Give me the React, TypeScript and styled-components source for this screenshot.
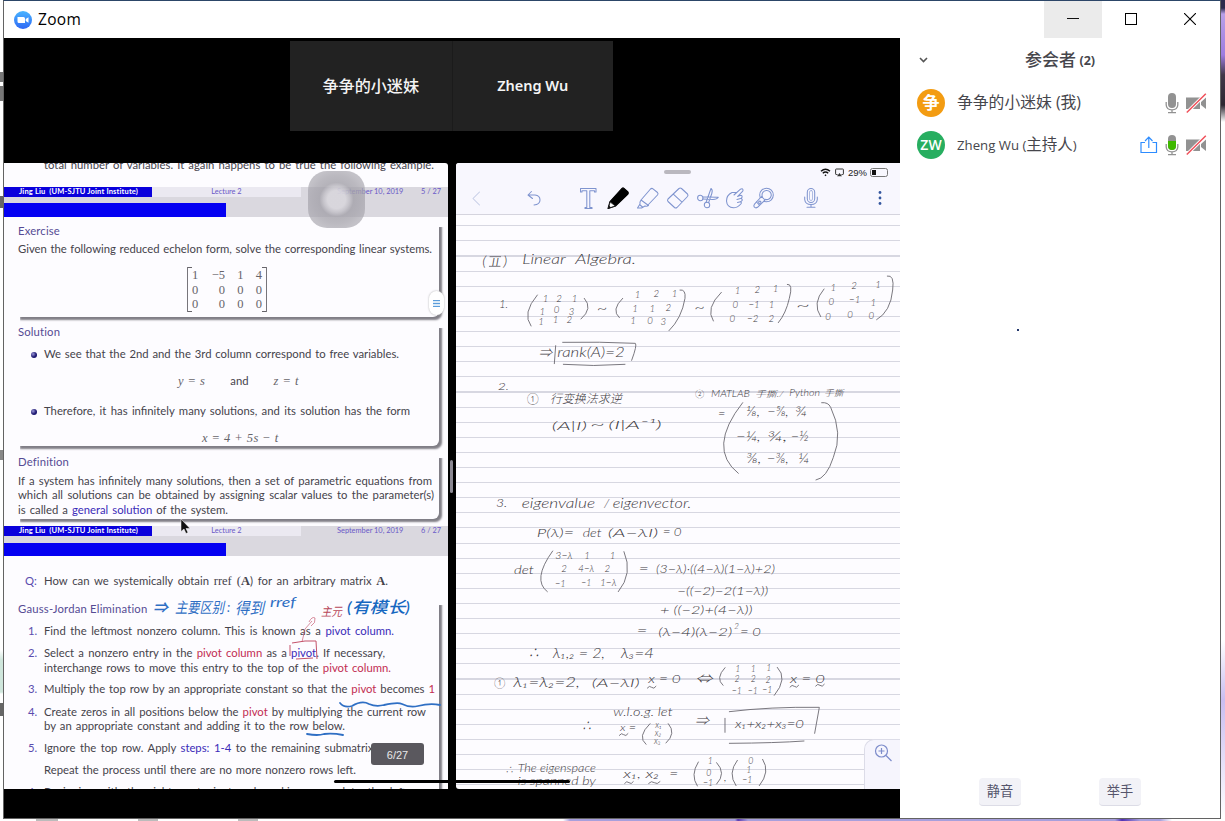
import React from "react";
import styled, { createGlobalStyle } from "styled-components";

const Global = createGlobalStyle`
  * { box-sizing: border-box; }
  body { margin: 0; overflow: hidden; font-family: "Open Sans", "Noto Sans CJK SC", sans-serif; }
`;

const Desktop = styled.div`
  width: 1225px;
  height: 821px;
  padding: 0 4px 1px 3px;
  background:
    linear-gradient(90deg, #fff 0 36px, #bbb 36px 58px, #fff 58px 138px, #bbb 138px 158px, #fff 158px 238px, #bbb 238px 258px, #fff 258px 563px, #a79fdc 570px 735px, #5b3bb0 738px, #a79fdc 748px 1115px, #5130b4 1122px, #a79fdc 1140px 1160px, #fff 1172px) 0 818px / 1225px 3px no-repeat,
    linear-gradient(#2c2a4c 0 8px, #b9a0e8 14px, #9d7ce0 55px, #403848 75px, #2c2630 105px, #fff 122px 640px, #c9bdf0 700px, #fff 818px) 1221px 0 / 4px 821px no-repeat,
    linear-gradient(#fff 0 72px, #777 72px 82px, #fff 82px 86px, #777 86px 101px, #fff 101px 196px, #666 196px 208px, #fff 208px 450px, #888 450px 460px, #fff 460px 650px, #cfe6dc 660px 692px, #fff 694px 703px, #666 703px 716px, #fff 716px) #fff;
`;
const Window = styled.div`
  display: flex;
  flex-direction: column;
  height: 819px;
  background: #fff;
  border: 1px solid #636363;
  border-top-color: #2c4668;
`;
const TitleBar = styled.header`
  height: 37px;
  display: flex;
  align-items: center;
  padding-left: 10px;
`;
const Title = styled.span`
  flex: 1;
  margin: -2px 0 0 6px;
  font-size: 15.5px;
  letter-spacing: 0.3px;
  color: #000;
`;
const WinButton = styled.div<{ $active?: boolean; $w: number }>`
  width: ${(p) => p.$w}px;
  height: 37px;
  padding-bottom: 1px;
  display: flex;
  align-items: center;
  justify-content: center;
  background: ${(p) => (p.$active ? "#ebebeb" : "transparent")};
`;
const Body = styled.div`
  flex: 1;
  min-height: 0;
  display: flex;
`;
const Stage = styled.main`
  width: 896px;
  background: #000;
`;
const Tiles = styled.div`
  height: 125px;
  padding: 3px 0 0 286px;
  display: flex;
`;
const Tile = styled.div`
  width: 161.5px;
  height: 90px;
  padding-bottom: 2px;
  background: #222;
  color: #f4f4f4;
  display: flex;
  align-items: center;
  justify-content: center;
  & + & { border-left: 1px solid #1b1b1b; }
`;
const TileName = styled.span<{ $size: number }>`
  font-family: "Noto Sans", "Noto Sans CJK SC", sans-serif;
  font-size: ${(p) => p.$size}px;
  font-weight: ${(p) => (p.$size > 15 ? 500 : 600)};
`;
const Shared = styled.div`
  position: relative;
  height: 626px;
  display: flex;
`;

/* ---------- slides ---------- */
const Slides = styled.section`
  width: 444px;
  height: 626px;
  overflow: hidden;
  position: relative;
  background: #fdfcff;
  border-radius: 0 3px 0 0;
  font-family: Lato, sans-serif;
  font-size: 11.3px;
  line-height: 14px;
  color: #45434b;
`;
const Row = styled.div<{ $gap?: number; $x?: number; $w?: number; $ls?: number }>`
  height: 14px;
  margin-top: ${(p) => p.$gap ?? 0}px;
  margin-left: ${(p) => p.$x ?? 0}px;
  width: ${(p) => (p.$w ? p.$w + "px" : "auto")};
  letter-spacing: ${(p) => p.$ls ?? 0}px;
  text-align: ${(p) => (p.$w ? "justify" : "left")};
  text-align-last: ${(p) => (p.$w ? "justify" : "left")};
`;
const Heading = styled(Row)`
  color: #554b94;
`;
const Tint = styled.span<{ $c?: string }>`
  color: ${(p) => p.$c ?? "#3b2bb8"};
`;
const Card = styled.div<{ $top: number; $h: number }>`
  position: relative;
  margin: ${(p) => p.$top}px 8px 0 14px;
  height: ${(p) => p.$h}px;
  &::before {
    content: "";
    position: absolute;
    inset: 2px 1px 0 2px;
    border-radius: 0 0 6px 0;
    box-shadow: 1.5px 1.5px 2px 0.7px #807e86;
    clip-path: inset(1px -6px -6px 0);
  }
`;
const Footer = styled.div<{ $top: number }>`
  margin-top: ${(p) => p.$top}px;
  height: 10px;
  display: flex;
  font-size: 7.4px;
  line-height: 9.5px;
  color: #6a58c8;
`;
const Author = styled.div`
  width: 148px;
  padding-left: 15px;
  background: #0a00dc;
  color: #fff;
  font-weight: 700;
  font-size: 7.5px;
  letter-spacing: 0.16px;
  white-space: pre;
`;
const Lecture = styled.div`
  width: 149px;
  background: #ebe9f1;
  text-align: center;
`;
const DateCell = styled.div`
  flex: 1;
  padding: 0 7px 0 36px;
  display: flex;
  justify-content: space-between;
  background: #dad8df;
`;
const Band = styled.div<{ $pt: number }>`
  height: 20px;
  padding-top: ${(p) => p.$pt}px;
  background: #dad8df;
`;
const Progress = styled.div`
  width: 222px;
  height: 100%;
  background: #0400f2;
`;
const Matrix = styled.div`
  width: 80px;
  height: 45px;
  margin: 11px 0 0 169px;
  padding: 0 4px;
  display: grid;
  grid-template-columns: 5px 28px 18.5px 18.5px;
  grid-auto-rows: 14.6px;
  text-align: right;
  font: 12.5px/17px "Liberation Serif", serif;
  color: #66646a;
  border: solid #77757b;
  border-width: 0 1px;
  background: linear-gradient(#66646a, #66646a) 0 0 / 4px 1px no-repeat, linear-gradient(#66646a, #66646a) 100% 0 / 4px 1px no-repeat, linear-gradient(#66646a, #66646a) 0 100% / 4px 1px no-repeat, linear-gradient(#66646a, #66646a) 100% 100% / 4px 1px no-repeat;
`;
const Formula = styled.div<{ $gap: number; $x: number }>`
  height: 14px;
  margin: ${(p) => p.$gap}px 0 0 ${(p) => p.$x}px;
  display: flex;
  gap: 25px;
  i { font: italic 12.5px/14px "Liberation Serif", serif; color: #66646a; letter-spacing: 0.45px; }
`;
const Serif = styled.span<{ $bold?: boolean }>`
  font: ${(p) => (p.$bold ? 700 : 400)} 12.5px/14px "Liberation Serif", serif;
`;
const Item = styled.div<{ $gap: number }>`
  display: flex;
  margin-top: ${(p) => p.$gap}px;
`;
const Marker = styled.div<{ $x: number; $w: number }>`
  width: ${(p) => p.$w}px;
  margin-left: ${(p) => p.$x}px;
  color: #5a4cae;
`;
const Bullet = styled.div`
  width: 6px;
  height: 6px;
  margin: 4.5px 7px 0 13px;
  border-radius: 50%;
  background: radial-gradient(circle at 35% 35%, #9a96d8, #1c1770 55%);
`;
const Overlay = styled.svg`
  position: absolute;
  left: 0;
  top: 0;
`;
const Touch = styled.div`
  position: absolute;
  left: 304px;
  top: 8px;
  width: 57px;
  height: 57px;
  border-radius: 19px;
  background: radial-gradient(circle, #d8d6dcf0 0 9px, #c3c1c8e0 13px, #a4a2aad0 17px, #a5a3abc0 24px, #a5a3aba8 30px);
`;
const Tab = styled.div`
  position: absolute;
  left: 425px;
  top: 128px;
  width: 15px;
  height: 24px;
  border-radius: 8px;
  background: #fff;
  box-shadow: 0 0 2px #aaa;
  padding: 9px 0 0 4px;
`;
const Bars = styled.div`
  width: 7px;
  height: 7px;
  background: repeating-linear-gradient(#5c9dda 0 1.2px, #dcebf8 1.2px 3px);
`;
const PageBadge = styled.div`
  position: absolute;
  left: 367px;
  top: 580px;
  width: 53px;
  height: 22px;
  border-radius: 3px;
  background: #5a585e;
  color: #e8e8ea;
  font: 11px/24px "Liberation Sans", sans-serif;
  text-align: center;
`;
const Divider = styled.div`
  width: 8px;
  padding: 297px 0 0 2px;
  background: #000;
`;
const Grip = styled.div`
  width: 3px;
  height: 33px;
  border-radius: 2px;
  background: #8b8892;
`;
const HomeBar = styled.div`
  position: absolute;
  left: 330px;
  top: 617px;
  width: 236px;
  height: 3px;
  border-radius: 2px;
  background: #000;
`;

/* ---------- notes ---------- */
const Notes = styled.section`
  position: relative;
  width: 444px;
  height: 626px;
  overflow: hidden;
  background: #fdfcff;
  border-radius: 3px 0 0 3px;
`;
const NotesHead = styled.div`
  height: 51.5px;
  background: #f8f7fe;
  border-bottom: 1px solid #d5d4de;
`;
const Status = styled.div`
  height: 18px;
  display: flex;
  align-items: center;
  gap: 4px;
  padding-left: 208px;
  font: 9.5px "Liberation Sans", sans-serif;
  color: #222;
`;
const Pull = styled.div`
  width: 27px;
  height: 3.5px;
  border-radius: 2px;
  background: #bab8bf;
  margin-right: 125px;
`;
const Battery = styled.div`
  width: 18px;
  height: 9px;
  padding: 1px;
  margin-left: -1px;
  border: 1px solid #777;
  border-radius: 2.5px;
  &::before { content: ""; display: block; width: 4px; height: 5px; background: #111; }
`;
const Tools = styled.div`
  display: flex;
  padding-top: 5px;
`;
const ToolIcon = styled.svg<{ $ml: number }>`
  width: 24px;
  height: 24px;
  flex: none;
  margin-left: ${(p) => p.$ml}px;
  fill: none;
  stroke: #7f94cf;
  stroke-width: 1.05;
  stroke-linejoin: round;
  stroke-linecap: round;
`;
const Ruled = styled.div`
  height: 574px;
  background: repeating-linear-gradient(transparent 0 10.2px, #d7d7e1 10.2px 11.3px, transparent 11.3px 15.11px);
`;
const Ink = styled.svg`
  display: block;
  font-family: Lato, "Noto Sans CJK SC", sans-serif;
  font-style: italic;
  font-weight: 300;
  fill: #3d3b42;
  path { fill: none; stroke: #6b6970; stroke-width: 2.7; stroke-linecap: round; }
`;
const Magnify = styled.div`
  position: absolute;
  right: 0;
  bottom: 0;
  width: 36px;
  height: 50px;
  padding: 3px 0 0 8px;
  border: 1px solid #dcdce8;
  border-right: 0;
  border-bottom: 0;
  border-radius: 10px 0 0 0;
  background: #f6f5fd;
`;

type T = [string, number, number, number, number?];
const Words = ({ items }: { items: T[] }) => (
  <>
    {items.map(([s, x, y, w, size], i) => (
      <text key={i} x={x} y={y} fontSize={size ?? 37} textLength={w} lengthAdjust="spacingAndGlyphs">
        {s}
      </text>
    ))}
  </>
);
type D = [string, number, number];
const Digits = ({ items, size = 29 }: { items: D[]; size?: number }) => (
  <g fontSize={size} textAnchor="middle">
    {items.map(([s, x, y], i) => (
      <text key={i} x={x} y={y}>{s}</text>
    ))}
  </g>
);
const tilde = (x: number, y: number, w = 26) => `M${x} ${y}q${w / 4} -9 ${w / 2} -2t${w / 2} -3`;

const Handwriting = () => (
  <Ink width="444" height="574" viewBox="456 215 444 574">
    <g transform="translate(450 155) scale(.33333)">
      <Words items={[
        ["(", 97, 332, 12, 38], ["II", 124, 332, 24, 36], [")", 160, 332, 12, 38],
        ["Linear", 217, 326, 130, 39], ["Algebra.", 376, 328, 182, 41],
        ["1.", 148, 458, 26], ["~", 440, 474, 32, 40], ["~", 733, 472, 32, 40], ["~", 1038, 465, 42, 40],
        ["⇒", 266, 606, 40], ["rank(A)=2", 322, 606, 202, 38],
      ]} />
      <path d="M120 305H152M118 334H150" />
      <Digits items={[
        ["1", 287, 440], ["2", 327, 440], ["1", 374, 440], ["1", 277, 480], ["0", 320, 474], ["3", 365, 480], ["1", 273, 510], ["1", 317, 504], ["2", 358, 504],
        ["1", 563, 430], ["2", 619, 427], ["1", 674, 425], ["1", 555, 472], ["1", 607, 472], ["2", 655, 468], ["1", 549, 508], ["0", 600, 508], ["3", 640, 510],
        ["1", 863, 418], ["2", 922, 415], ["1", 977, 412], ["0", 856, 460], ["−1", 912, 460], ["1", 965, 458], ["0", 847, 502], ["−2", 908, 502], ["2", 964, 500],
        ["1", 1150, 408], ["2", 1212, 402], ["1", 1284, 398], ["0", 1144, 450], ["−1", 1214, 445], ["1", 1270, 452], ["0", 1134, 495], ["0", 1200, 488], ["0", 1264, 492],
      ]} />
      <path d="M262 420Q215 475 243 513M403 430Q430 460 393 492M518 430Q482 465 508 488M690 405Q708 402 705 430Q695 490 657 527M814 412Q765 460 790 498M1012 388Q1030 385 1018 430Q1008 475 985 503M1122 402Q1085 445 1112 485M1312 363Q1334 358 1328 405Q1322 470 1280 494M317 572L313 626M338 562Q450 560 556 565Q562 570 545 616M340 628Q430 635 525 628" />
    </g>
    <g transform="translate(450 370) scale(.33333)">
      <Words items={[
        ["2.", 143, 60, 34, 28], ["①", 230, 98, 36, 36], ["行变换法求逆", 300, 98, 215, 36],
        ["(A|I)", 305, 180, 106], ["~", 420, 178, 45, 40], ["(I|A⁻¹)", 475, 178, 160],
        ["②", 735, 80, 28, 26], ["MATLAB", 783, 81, 117, 28], ["手撕./", 915, 80, 86, 25], ["Python", 1018, 78, 92, 28], ["手撕", 1122, 78, 58, 25],
        ["=", 804, 143, 22], ["⅛,", 888, 138, 42, 38], ["−⅝,", 952, 138, 64, 38], ["¾", 1035, 138, 36, 38],
        ["−¼,", 858, 212, 74, 38], ["¾,", 952, 212, 60, 38], ["−½", 1022, 212, 54, 38],
        ["⅜,", 888, 280, 46, 38], ["−⅜,", 950, 280, 66, 38], ["¼", 1044, 280, 34, 38],
        ["3.", 138, 412, 34, 36], ["eigenvalue", 215, 415, 220, 42], ["/", 462, 415, 16], ["eigenvector.", 488, 415, 236, 42],
        ["P(λ)=", 260, 500, 112], ["det", 398, 500, 57], ["(A−λI)", 473, 500, 152], ["= 0", 638, 498, 57],
        ["det", 192, 612, 60], ["=", 566, 610, 30], ["(3−λ)·((4−λ)(1−λ)+2)", 618, 608, 357],
        ["3−λ", 316, 568, 52, 30], ["4−λ", 385, 605, 48, 28], ["−1", 315, 650, 32, 28], ["−1", 394, 648, 30, 28], ["1−λ", 450, 648, 50, 28],
      ]} />
      <Digits items={[["1", 411, 568], ["1", 488, 566], ["2", 342, 607], ["2", 472, 607]]} />
      <path d="M878 98Q770 235 865 310M1115 98Q1135 96 1142 112Q1180 190 1150 262Q1130 325 1098 330M308 543Q245 630 292 665M522 545Q550 610 505 665" />
    </g>
    <g transform="translate(450 570) scale(.33333)">
      <Words items={[
        ["−((−2)−2(1−λ))", 682, 75, 273], ["+ ((−2)+(4−λ))", 630, 132, 278], ["=", 560, 196, 32], ["(λ−4)(λ−2)", 625, 198, 222], ["2", 853, 176, 14, 22], ["= 0", 870, 198, 63],
        ["∴", 235, 262, 34], ["λ₁,₂ = 2,", 308, 265, 157, 40], ["λ₃=4", 512, 265, 100, 40],
        ["①", 132, 352, 34, 34], ["λ₁=λ₂=2,", 190, 352, 200, 39], ["(A−λI)", 425, 350, 144], ["x = 0", 595, 340, 97], ["⇔", 735, 340, 52], ["x = 0", 1020, 340, 105],
        ["∴", 395, 480, 30], ["w.l.o.g. let", 490, 438, 178, 34], ["x =", 510, 482, 48, 30], ["⇒", 735, 465, 42], ["x₁+x₂+x₃=0", 855, 475, 207],
        ["∴", 165, 608, 26, 28], ["The eigenspace", 203, 607, 235, 35], ["is spanned by", 203, 645, 235, 33],
        ["x₁, x₂", 520, 625, 108], ["=", 658, 624, 27], [",", 822, 632, 8],
      ]} />
      <Digits size={26} items={[
        ["1", 863, 305], ["1", 910, 305], ["1", 956, 303], ["2", 861, 335], ["2", 910, 335], ["2", 954, 338], ["−1", 860, 372], ["−1", 908, 371], ["−1", 952, 370],
        ["1", 781, 582], ["0", 776, 618], ["−1", 774, 648], ["0", 902, 582], ["1", 896, 610], ["−1", 892, 640],
      ]} />
      <Digits size={26} items={[["x₁", 626, 474], ["x₂", 624, 498], ["x₃", 622, 522]]} />
      <path d={"M825 293Q795 325 819 346M982 292Q1015 325 973 376M600 461Q560 500 588 523M655 461Q680 490 648 519M825 445L825 487M838 425Q960 410 1108 412L1094 490M838 520Q980 519 1062 513M745 576Q720 615 742 648M800 578Q830 610 800 642M862 571Q832 610 858 647M938 568Q962 605 928 647" +
        tilde(592, 354) + tilde(1020, 351) + tilde(1097, 348) + tilde(508, 496) + tilde(524, 640) + tilde(596, 640, 34)} />
    </g>
  </Ink>
);

const Annotations = () => (
  <Overlay width="444" height="626" viewBox="4 163 444 626">
    <g fontStyle="italic" fontFamily='Lato, "Noto Sans CJK SC", sans-serif' fill="#2f6fc4">
      <text x="153" y="613" fontSize="15" fontWeight="700">⇒</text>
      <text x="175" y="613" fontSize="15" textLength="49" lengthAdjust="spacingAndGlyphs">主要区别</text>
      <text x="227" y="612" fontSize="13">:</text>
      <text x="235" y="614" fontSize="16" textLength="29" lengthAdjust="spacingAndGlyphs">得到</text>
      <text x="270" y="607" fontSize="13" textLength="26" lengthAdjust="spacingAndGlyphs">rref</text>
      <text x="347" y="613" fontSize="16" fontWeight="500" fill="#1667c0" textLength="63" lengthAdjust="spacingAndGlyphs">(有模长)</text>
      <text x="321" y="616" fontSize="12" fill="#b8475a" textLength="21" lengthAdjust="spacingAndGlyphs">主元</text>
    </g>
    <g fill="none" stroke="#c4526a" strokeWidth="1">
      <path d="M302 642L305 629L312 621M309 622Q312 616 315 618Q316 623 311 626" opacity=".65" />
      <path d="M292 643Q306 640 316 641L317 659M290 645L290 656M296 659L313 658" />
    </g>
    <g fill="none" stroke="#2f6fc4" strokeWidth="1.8" strokeLinecap="round">
      <path d="M340 703Q344 708 352 706Q362 700 369 704Q376 707 384 705Q398 702 402 704Q410 708 418 706Q430 703 440 705M307 734Q318 736 324 734Q333 733 343 735" />
    </g>
    <path d="M181 519V531.5L184 529L186 533.5L188 532.5L186 528.5H190Z" fill="#111" stroke="#fff" strokeWidth=".5" />
  </Overlay>
);

const red = "#c22d52";

const SlideFooter = ({ top, page, pt }: { top: number; page: number; pt: number }) => (
  <>
    <Footer $top={top}>
      <Author>Jing Liu  (UM-SJTU Joint Institute)</Author>
      <Lecture>Lecture 2</Lecture>
      <DateCell><span>September 10, 2019</span><span>{page} / 27</span></DateCell>
    </Footer>
    <Band $pt={pt}><Progress /></Band>
  </>
);

const SlidePane = () => (
  <Slides>
    <Row $gap={-5} $x={40} $w={390}>total number of variables. It again happens to be true the following example.</Row>
    <SlideFooter top={15} page={5} pt={6} />
    <Card $top={7} $h={93}>
      <Heading $ls={0.15}>Exercise</Heading>
      <Row $gap={4} $w={414}>Given the following reduced echelon form, solve the corresponding linear systems.</Row>
      <Matrix>
        {["1", "−5", "1", "4", "0", "0", "0", "0", "0", "0", "0", "0"].map((v, i) => <span key={i}>{v}</span>)}
      </Matrix>
    </Card>
    <Card $top={8} $h={121}>
      <Heading $ls={0.15}>Solution</Heading>
      <Item $gap={8}><Bullet /><Row $w={355}>We see that the 2nd and the 3rd column correspond to free variables.</Row></Item>
      <Formula $gap={13} $x={160}><i>y = s</i><span>and</span><i>z = t</i></Formula>
      <Item $gap={16}><Bullet /><Row $w={366}>Therefore, it has infinitely many solutions, and its solution has the form</Row></Item>
      <Formula $gap={13} $x={184}><i>x = 4 + 5s − t</i></Formula>
    </Card>
    <Card $top={9} $h={64}>
      <Heading $ls={0.15}>Definition</Heading>
      <Row $gap={4.5} $w={414}>If a system has infinitely many solutions, then a set of parametric equations from</Row>
      <Row $gap={0.5} $w={416}>which all solutions can be obtained by assigning scalar values to the parameter(s)</Row>
      <Row $gap={0.5} $w={210}>is called a <Tint>general solution</Tint> of the system.</Row>
    </Card>
    <SlideFooter top={7} page={6} pt={7} />
    <Item $gap={18}><Marker $x={21} $w={19}>Q:</Marker><Row $w={344}>How can we systemically obtain <Serif>rref (</Serif><Serif $bold>A</Serif>) for an arbitrary matrix <Serif $bold>A</Serif>.</Row></Item>
    <Card $top={14} $h={210}>
      <Heading $ls={0.2}>Gauss-Jordan Elimination</Heading>
      <Item $gap={8}><Marker $x={10} $w={16}>1.</Marker><Row $w={350}>Find the leftmost nonzero column. This is known as a <Tint>pivot column.</Tint></Row></Item>
      <Item $gap={8}><Marker $x={10} $w={16}>2.</Marker><Row $w={341}>Select a nonzero entry in the <Tint $c={red}>pivot column</Tint> as a <Tint>pivot</Tint>. If necessary,</Row></Item>
      <Row $gap={0.8} $x={26} $w={347}>interchange rows to move this entry to the top of the <Tint $c={red}>pivot column.</Tint></Row>
      <Item $gap={7.6}><Marker $x={10} $w={16}>3.</Marker><Row $w={391}>Multiply the top row by an appropriate constant so that the <Tint $c={red}>pivot</Tint> becomes <Tint $c={red}>1</Tint></Row></Item>
      <Item $gap={8.2}><Marker $x={10} $w={16}>4.</Marker><Row $w={382}>Create zeros in all positions below the <Tint $c={red}>pivot</Tint> by multiplying the current row</Row></Item>
      <Row $gap={0.6} $x={26} $w={301}>by an appropriate constant and adding it to the row below.</Row>
      <Item $gap={8}><Marker $x={10} $w={16}>5.</Marker><Row $w={332}>Ignore the top row. Apply <Tint>steps: 1-4</Tint> to the remaining submatrix.</Row></Item>
      <Row $gap={8} $x={26} $w={312}>Repeat the process until there are no more nonzero rows left.</Row>
      <Item $gap={7.5}><Marker $x={10} $w={16}>6.</Marker><Row $w={362}>Beginning with the right-most pivot and working upward to the left</Row></Item>
    </Card>
    <Touch />
    <Tab><Bars /></Tab>
    <Annotations />
    <PageBadge>6/27</PageBadge>
  </Slides>
);

const NotePane = () => (
  <Notes>
    <NotesHead>
      <Status>
        <Pull />
        <svg width="11" height="9" viewBox="0 0 11 9" fill="none" stroke="#111" strokeWidth="1.5"><path d="M1 3.2Q5.5 -.8 10 3.2M2.8 5.2Q5.5 2.8 8.2 5.2" /><path d="M5.5 6.2L6.5 7.2L5.5 8.2L4.5 7.2Z" fill="#111" stroke="none" /></svg>
        <svg width="9" height="9" viewBox="0 0 9 9" fill="none" stroke="#333"><path d="M2.5 6.5H1.2Q.6 6.5 .6 5.9V1.6Q.6 1 1.2 1H7.8Q8.4 1 8.4 1.6V5.9Q8.4 6.5 7.8 6.5H6.5" /><path d="M4.5 5L7 8.3H2Z" fill="#333" stroke="none" /></svg>
        <span>29%</span>
        <Battery />
      </Status>
      <Tools>
        <ToolIcon $ml={8} viewBox="0 0 24 24"><path d="M15.5 6L9 12.5L15.5 19" stroke="#c5cde6" /></ToolIcon>
        <ToolIcon $ml={34} viewBox="0 0 24 24"><path d="M9.5 5.5L6 9L10.5 12.5M6 9H13Q18 9.5 18 14T12 19" /></ToolIcon>
        <ToolIcon $ml={30} viewBox="0 0 24 24"><path d="M4.5 2.5H20V6H18.5V4.8H13.8V21.5H16V22.5H9V21.5H10.8V4.8H6V6H4.5Z" /></ToolIcon>
        <ToolIcon $ml={6} viewBox="0 0 24 24"><path d="M2 22.5L4 15.5L16 2.3Q17 1.5 18 2.3L22 6Q22.8 7 22 8L9.5 20Z" fill="#000" stroke="#000" /><path d="M2.5 22L4.2 16L9 19.8Z" fill="#fff" stroke="#222" strokeWidth=".8" /><path d="M2 22.7L3 19.5L5 21.5Z" fill="#111" stroke="none" /></ToolIcon>
        <ToolIcon $ml={6} viewBox="0 0 24 24"><path d="M5 14L14.5 3Q15.8 1.8 17 2.8L21.5 6.5Q22.6 7.7 21.5 9L11.5 19.5M5 14L12.5 19.5Q11 20.5 9 20L5.5 22H1.5L4 18Q3.5 16 5 14ZM3.5 18.5L6.5 21" /></ToolIcon>
        <ToolIcon $ml={5.5} viewBox="0 0 24 24"><path d="M2 15.5Q1 14.3 2 13L13 2.5Q14.2 1.5 15.5 2.5L21.5 8Q22.5 9.3 21.5 10.5L11 21.5Q9.7 22.5 8.5 21.5ZM7.3 8.2L16 16.2" /></ToolIcon>
        <ToolIcon $ml={6.5} viewBox="0 0 24 24"><circle cx="4.3" cy="12" r="2.7" /><circle cx="11" cy="19" r="2.7" /><path d="M6.8 11L22.3 11.3Q21 13.5 17 13.5L6.8 13M10 16.5L15 2.5Q17 4 15.8 7.5L12.6 16.7" /></ToolIcon>
        <ToolIcon $ml={3} viewBox="0 0 24 24"><path d="M11 9L17.5 3.2Q19.5 2.2 20 3.8Q20.2 4.8 19.3 5.7L14.5 10.5L17.5 9.2Q19.5 9.3 19 11.3L17.8 12.5Q19.8 12.7 19 14.7L17.5 15.8Q19 16.5 17.8 18Q14.5 21.8 10.5 21.8Q4 21.5 3.5 15Q3.5 9 9 6.5L13.8 6.3" /><path d="M14 13.5L17.5 12.5M14.5 16.5L17.5 15.8" /></ToolIcon>
        <ToolIcon $ml={5} viewBox="0 0 24 24"><circle cx="14.5" cy="9" r="6.8" /><path d="M10.3 10.5A4.6 4.6 0 1 1 13 13.3" /><path d="M9.5 10.5L13 14L5.5 21.3Q3.8 22.5 2.4 21.2Q1.3 19.8 2.5 18.2Z" fill="#f8f7fe" /><circle cx="7.8" cy="16.3" r="1.2" /><path d="M4.5 16L7.5 19.2" /></ToolIcon>
        <ToolIcon $ml={23} viewBox="0 0 24 24"><rect x="8.3" y="2.5" width="7.4" height="14" rx="3.7" /><rect x="10.5" y="4.5" width="3" height="10" rx="1.5" strokeWidth=".6" /><path d="M5.7 11V13.5Q6.2 18.5 12 18.5T18.3 13.5V11M12 18.5V21M8 21.2H16" /></ToolIcon>
        <ToolIcon $ml={44.5} viewBox="0 0 24 24"><g fill="#34579f" stroke="none"><circle cx="12" cy="6.5" r="1.4" /><circle cx="12" cy="12" r="1.4" /><circle cx="12" cy="17.5" r="1.4" /></g></ToolIcon>
      </Tools>
    </NotesHead>
    <Ruled><Handwriting /></Ruled>
    <Magnify>
      <svg width="20" height="20" viewBox="0 0 20 20" fill="none" stroke="#7d8ccb" strokeWidth="1.2"><circle cx="8.5" cy="8" r="6" /><path d="M8.5 5V11M5.5 8H11.5M13 12.5L18.5 18" /></svg>
    </Magnify>
  </Notes>
);

/* ---------- participants ---------- */
const Side = styled.aside`
  flex: 1;
  display: flex;
  flex-direction: column;
  background: #fff;
  color: #46464c;
`;
const SideHead = styled.div`
  height: 44px;
  display: flex;
  align-items: center;
  padding-left: 19px;
`;
const SideTitle = styled.div`
  flex: 1;
  padding: 0 28px 4px 0;
  text-align: center;
  font-size: 17px;
  font-weight: 500;
  small { font-size: 12.5px; font-weight: 700; vertical-align: 1px; margin-left: -1px; }
`;
const Person = styled.div`
  height: 42px;
  display: flex;
  align-items: center;
  padding: 0 13px 0 17px;
`;
const Avatar = styled.div<{ $bg: string; $size: number }>`
  width: 28px;
  height: 28px;
  margin-right: 12px;
  border-radius: 50%;
  background: ${(p) => p.$bg};
  color: #fff;
  font-size: ${(p) => p.$size}px;
  line-height: 27px;
  font-weight: 600;
  text-align: center;
`;
const Name = styled.div<{ $size: number }>`
  flex: 1;
  padding-bottom: 3px;
  white-space: nowrap;
  font-size: ${(p) => p.$size}px;
  span { font-size: 15.5px; }
`;
const Icons = styled.div`
  display: flex;
  gap: 7px;
  align-items: center;
`;
const Spot = styled.div`
  width: 2px;
  height: 2px;
  margin: 163px 0 0 117px;
  background: #24386c;
`;
const Actions = styled.div`
  margin-top: auto;
  padding: 0 0 12px 79px;
  display: flex;
  gap: 78px;
`;
const Action = styled.button`
  width: 42px;
  height: 28px;
  padding: 0 0 3px;
  border: 0;
  border-bottom: 1px solid #dcdce6;
  border-radius: 4px;
  background: #f2f2f7;
  color: #55556c;
  font: 13.2px "Noto Sans CJK SC", sans-serif;
`;

const Mic = ({ level }: { level?: boolean }) => (
  <svg width="14" height="21" viewBox="0 0 14 21" fill="none">
    <rect x="3" y="0" width="8" height="15" rx="4" fill="#929292" />
    {level && <path d="M3 6H11V11Q11 15 7 15T3 11Z" fill="#3fb800" />}
    <path d="M1.2 9V12Q1.5 16.8 7 16.8T12.8 12V9M7 17V19.5M3 19.7H11" stroke="#929292" strokeWidth="1.3" />
  </svg>
);
const Cam = () => (
  <svg width="21" height="21" viewBox="0 0 21 21">
    <path d="M0 4.5H14V16H0ZM15 9L20 4.5V16L15 12Z" fill="#929292" />
    <path d="M.8 19.5L19.8 .8" stroke="#fff" strokeWidth="3.4" />
    <path d="M.8 19.5L19.8 .8" stroke="#f0505a" strokeWidth="1.5" />
  </svg>
);
const Share = () => (
  <svg width="18" height="18" viewBox="0 0 18 18" fill="none" stroke="#2d8cff" strokeWidth="1.2">
    <path d="M5 6.5H1V16.5H16.5V6.5H12.5M8.8 12V1.2M5 5L8.8 1.2L12.5 5" />
  </svg>
);

export default function App() {
  return (
    <Desktop>
      <Global />
      <Window>
        <TitleBar>
          <svg width="18" height="18" viewBox="0 0 18 18">
            <defs><linearGradient id="zg" x1="0" y1="0" x2="0" y2="1"><stop offset="0" stopColor="#49b4ff" /><stop offset="1" stopColor="#2e68f5" /></linearGradient></defs>
            <circle cx="9" cy="9" r="9" fill="url(#zg)" />
            <path d="M3.5 6H9.5Q11 6 11 7.5V12H5Q3.5 12 3.5 10.5ZM11.7 8L14.5 6.2V11.8L11.7 10Z" fill="#fff" />
          </svg>
          <Title>Zoom</Title>
          <WinButton $active $w={58}><svg width="12" height="12"><path d="M0 5.5H12" stroke="#111" /></svg></WinButton>
          <WinButton $w={58}><svg width="12" height="12"><rect x=".5" y=".5" width="11" height="11" fill="none" stroke="#000" /></svg></WinButton>
          <WinButton $w={60}><svg width="12" height="12"><path d="M0 0L12 12M12 0L0 12" stroke="#000" strokeWidth="1.1" /></svg></WinButton>
        </TitleBar>
        <Body>
          <Stage>
            <Tiles>
              <Tile><TileName $size={16.1}>争争的小迷妹</TileName></Tile>
              <Tile><TileName $size={14.5}>Zheng Wu</TileName></Tile>
            </Tiles>
            <Shared>
              <SlidePane />
              <Divider><Grip /></Divider>
              <NotePane />
              <HomeBar />
            </Shared>
          </Stage>
          <Side>
            <SideHead>
              <svg width="9" height="6" viewBox="0 0 9 6" fill="none" stroke="#555" strokeWidth="1.6"><path d="M1 1L4.5 4.5L8 1" /></svg>
              <SideTitle>参会者 <small>(2)</small></SideTitle>
            </SideHead>
            <Person>
              <Avatar $bg="#f39c12" $size={17}>争</Avatar>
              <Name $size={15.8}>争争的小迷妹 (我)</Name>
              <Icons><Mic /><Cam /></Icons>
            </Person>
            <Person>
              <Avatar $bg="#27ae60" $size={14}>ZW</Avatar>
              <Name $size={13.2}>Zheng Wu (<span>主持人</span>)</Name>
              <Icons><Share /><Mic level /><Cam /></Icons>
            </Person>
            <Spot />
            <Actions><Action>静音</Action><Action>举手</Action></Actions>
          </Side>
        </Body>
      </Window>
    </Desktop>
  );
}
